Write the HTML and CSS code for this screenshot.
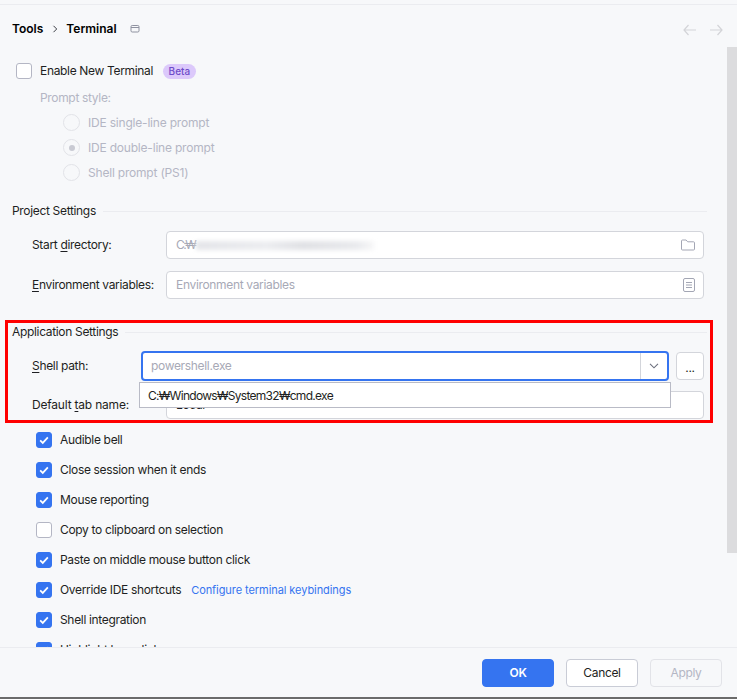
FILE: index.html
```html
<!DOCTYPE html>
<html lang="en">
<head>
<meta charset="utf-8">
<title>Settings - Terminal</title>
<link rel="stylesheet" href="styles.css">
</head>
<body>
<div class="dialog">
  <div class="topline"></div>
  <header class="crumbs">
    <span class="crumb">Tools</span>
    <svg class="crumb-sep" width="6" height="8" viewBox="0 0 6 8"><path d="M1.5 .8 4.7 4 1.5 7.2" fill="none" stroke="#3b3d45" stroke-width="1"/></svg>
    <span class="crumb">Terminal</span>
    <svg class="crumb-icon" width="10" height="10" viewBox="0 0 10 10"><rect x="1" y="1.5" width="8" height="6.5" rx="1.2" fill="none" stroke="#8f92a0"/><path d="M1 3.5h8" stroke="#8f92a0"/></svg>
    <span class="nav">
      <svg width="13" height="12" viewBox="0 0 13 12"><path d="M5.5 1 1 6l4.5 5M1 6h12" fill="none" stroke="#d3d4d8" stroke-width="1.2"/></svg>
      <svg width="13" height="12" viewBox="0 0 13 12"><path d="m7.500 1 4.500 5-4.500 5M12 6H0" fill="none" stroke="#d3d4d8" stroke-width="1.2"/></svg>
    </span>
  </header>
  <main class="content">
    <div class="check-row first">
      <span class="box"></span><span>Enable New Terminal</span><span class="beta">Beta</span>
    </div>
    <div class="prompt-label muted">Prompt style:</div>
    <div class="radios">
      <div class="radio-row muted"><span class="radio"></span>IDE single-line prompt</div>
      <div class="radio-row muted"><span class="radio on"></span>IDE double-line prompt</div>
      <div class="radio-row muted"><span class="radio"></span>Shell prompt (PS1)</div>
    </div>

    <div class="section project"><span>Project Settings</span><i></i></div>
    <div class="field-row">
      <label class="lab"><span>Start <u>d</u>irectory:</span></label>
      <div class="input">
        <span class="ph drive">C:₩</span><span class="blur"></span>
        <svg class="in-icon" width="14" height="12" viewBox="0 0 14 12"><path d="M.5 2a1 1 0 0 1 1-1h3.600l1.600 1.800h5.800a1 1 0 0 1 1 1V10a1 1 0 0 1-1 1h-11a1 1 0 0 1-1-1z" fill="none" stroke="#a3a6b4"/></svg>
      </div>
    </div>
    <div class="field-row second">
      <label class="lab"><span><u>E</u>nvironment variables:</span></label>
      <div class="input">
        <span class="ph">Environment variables</span>
        <svg class="in-icon" width="12" height="14" viewBox="0 0 12 14"><rect x=".5" y=".5" width="11" height="13" rx="1.500" fill="none" stroke="#a3a6b4"/><path d="M3 4.500h6M3 7h6M3 9.500h6" stroke="#a3a6b4"/></svg>
      </div>
    </div>

    <div class="section app"><span>Application Settings</span><i></i></div>
    <div class="field-row shell">
      <label class="lab short"><span><u>S</u>hell path:</span></label>
      <div class="combo">
        <span class="ph">powershell.exe</span>
        <span class="arrow"><svg width="10" height="6" viewBox="0 0 10 6"><path d="m1 .8 4 4 4-4" fill="none" stroke="#6c707e" stroke-width="1.100"/></svg></span>
      </div>
      <div class="dots">...</div>
    </div>
    <div class="field-row tab">
      <label class="lab"><span class="tab-label">Default <u>t</u>ab name:</span></label>
      <div class="input tabinput"><span class="val">Local</span></div>
    </div>

    <div class="checks">
      <div class="check-row"><span class="box on"><svg viewBox="0 0 16 16"><path d="m3.600 8.300 3 3 5.800-6.400" fill="none" stroke="#fff" stroke-width="2"/></svg></span>Audible bell</div>
      <div class="check-row"><span class="box on"><svg viewBox="0 0 16 16"><path d="m3.600 8.300 3 3 5.800-6.400" fill="none" stroke="#fff" stroke-width="2"/></svg></span>Close session when it ends</div>
      <div class="check-row"><span class="box on"><svg viewBox="0 0 16 16"><path d="m3.600 8.300 3 3 5.800-6.400" fill="none" stroke="#fff" stroke-width="2"/></svg></span>Mouse reporting</div>
      <div class="check-row"><span class="box"></span>Copy to clipboard on selection</div>
      <div class="check-row"><span class="box on"><svg viewBox="0 0 16 16"><path d="m3.600 8.300 3 3 5.800-6.400" fill="none" stroke="#fff" stroke-width="2"/></svg></span>Paste on middle mouse button click</div>
      <div class="check-row"><span class="box on"><svg viewBox="0 0 16 16"><path d="m3.600 8.300 3 3 5.800-6.400" fill="none" stroke="#fff" stroke-width="2"/></svg></span>Override IDE shortcuts<span class="link">Configure terminal keybindings</span></div>
      <div class="check-row"><span class="box on"><svg viewBox="0 0 16 16"><path d="m3.600 8.300 3 3 5.800-6.400" fill="none" stroke="#fff" stroke-width="2"/></svg></span>Shell integration</div>
      <div class="check-row"><span class="box on"><svg viewBox="0 0 16 16"><path d="m3.600 8.300 3 3 5.800-6.400" fill="none" stroke="#fff" stroke-width="2"/></svg></span>Highlight hyperlinks</div>
    </div>

    <div class="popup">C:₩Windows₩System32₩cmd.exe</div>
    <div class="annotation"></div>
    <div class="scrollbar"></div>
  </main>
  <footer class="footer">
    <button class="btn primary">OK</button>
    <button class="btn">Cancel</button>
    <button class="btn disabled">Apply</button>
  </footer>
</div>
</body>
</html>
```
FILE: styles.css
```css
* { box-sizing: border-box; }
html, body { margin: 0; padding: 0; }
body {
  font-family: Inter, "Noto Sans CJK KR", sans-serif;
  font-size: 12px;
  line-height: 16px;
  letter-spacing: -0.33px;
  color: #1e1f22;
  background: #f7f8fa;
}
.dialog {
  width: 737px;
  height: 699px;
  display: flex;
  flex-direction: column;
  border-bottom: 2px solid #6b6b6b;
  overflow: hidden;
}
.topline { height: 5px; flex: none; border-bottom: 1px solid #ebecf0; }
.crumbs {
  flex: none;
  height: 42px;
  padding: 5px 14px 0 12px;
  display: flex;
  align-items: center;
}
.crumb { font-weight: 600; color: #000; letter-spacing: 0; }
.crumb-sep { margin: 0 8px 0 9px; }
.crumb-icon { margin-left: 13px; }
.nav { margin-left: auto; margin-top: 3px; display: flex; gap: 14px; }
.content {
  flex: 1;
  position: relative;
  overflow: hidden;
  padding-top: 16px;
  min-height: 0;
}
.check-row {
  display: flex;
  align-items: center;
  height: 30px;
  padding-left: 36px;
}
.check-row.first { height: 16px; padding-left: 16px; }
.box {
  flex: none;
  width: 16px;
  height: 16px;
  margin-right: 8px;
  border: 1px solid #b4b6c4;
  border-radius: 3px;
  background: #fff;
}
.box.on { background: #3574f0; border-color: #3574f0; }
.box svg { display: block; width: 14px; height: 14px; }
.beta {
  margin-left: 10px;
  height: 15px;
  padding: 0 5.500px;
  display: flex;
  align-items: center;
  border-radius: 8px;
  background: #dcc9fb;
  color: #6e4cc9;
  font-size: 10px;
  font-weight: 500;
  letter-spacing: 0;
}
.muted { color: #b4b6c4; }
.radio-row.muted { letter-spacing: -0.2px; }
.prompt-label { margin: 11px 0 0 40px; }
.radios { margin-top: 4px; padding-left: 63px; }
.radio-row { display: flex; align-items: center; height: 25px; }
.radio {
  width: 17px;
  height: 17px;
  margin-right: 8px;
  border: 1px solid #e2e3e8;
  border-radius: 50%;
  background: #f7f8fa;
  display: flex;
  align-items: center;
  justify-content: center;
}
.radio.on::after {
  content: "";
  width: 6px;
  height: 6px;
  border-radius: 50%;
  background: #c9cad3;
}
.section {
  display: flex;
  align-items: center;
  gap: 7px;
  padding: 0 30px 0 12px;
}
.section i { flex: 1; height: 1px; background: #ebecf0; }
.project { margin-top: 18px; }
.app { margin-top: 25px; }
.field-row {
  display: flex;
  align-items: center;
  padding-left: 32px;
  padding-right: 33px;
  margin-top: 12px;
}
.field-row.second { margin-top: 12px; }
.lab { flex: none; width: 134px; }
.lab.short { width: 109px; }
.lab u { text-underline-offset: 2px; }
.tab-label { letter-spacing: -0.2px; }
.input {
  flex: 1;
  height: 28px;
  display: flex;
  align-items: center;
  padding: 0 8px 0 9px;
  background: #fff;
  border: 1px solid #d3d5db;
  border-radius: 4px;
  min-width: 0;
}
.ph { color: #a7a9b6; }
.ph.drive { letter-spacing: -1.5px; }
.val { color: #1e1f22; }
.blur {
  width: 178px;
  height: 9px;
  margin-left: 1px;
  background: linear-gradient(90deg, #e4e5e9, #ecedf0 40%, #e0e1e5 60%, #e9eaed 90%, #f7f7f8);
  filter: blur(2px);
}
.in-icon { margin-left: auto; flex: none; }
.shell { margin-top: 11px; padding-right: 33px; }
.combo {
  flex: 1;
  height: 30px;
  display: flex;
  align-items: center;
  padding-left: 8px;
  background: #fff;
  border: 2px solid #3574f0;
  border-radius: 4px;
}
.arrow {
  margin-left: auto;
  width: 27px;
  height: 100%;
  border-left: 1px solid #d3d5db;
  display: flex;
  align-items: center;
  justify-content: center;
}
.dots {
  flex: none;
  width: 28px;
  height: 28px;
  margin-left: 7px;
  background: #fff;
  border: 1px solid #d3d5db;
  border-radius: 4px;
  display: flex;
  align-items: flex-end;
  justify-content: center;
  padding-bottom: 5px;
  line-height: 12px;
}
.tab { margin-top: 10px; }
.tabinput { margin-left: 0; height: 28px; }
.checks { margin-top: 6px; }
.popup {
  position: absolute;
  left: 139px;
  top: 335px;
  width: 532px;
  height: 26px;
  padding: 0 8px;
  line-height: 25px;
  letter-spacing: -0.7px;
  background: #fff;
  border: 1px solid #b9bbc6;
  color: #1e1f22;
}
.annotation {
  position: absolute;
  left: 5px;
  top: 273px;
  width: 708px;
  height: 103px;
  border: 3px solid #f00;
  pointer-events: none;
}
.scrollbar {
  position: absolute;
  right: 0;
  top: 0;
  width: 10px;
  height: 506px;
  background: #dcdcde;
}
.link { margin-left: 10px; color: #3574f0; font-size: 11px; letter-spacing: -0.07px; }
.footer {
  flex: none;
  height: 50px;
  border-top: 1px solid #ebecf0;
  display: flex;
  justify-content: flex-end;
  gap: 12px;
  padding: 11px 15px 0 0;
}
.btn {
  width: 72px;
  height: 28px;
  font: inherit;
  letter-spacing: inherit;
  color: #1e1f22;
  background: #fff;
  border: 1px solid #c9ccd6;
  border-radius: 4px;
  padding: 0;
}
.btn.primary { background: #3574f0; border-color: #3574f0; color: #fff; font-weight: 600; }
.btn.disabled { background: #f7f8fa; border-color: #e2e3e8; color: #b4b6c4; }
```
